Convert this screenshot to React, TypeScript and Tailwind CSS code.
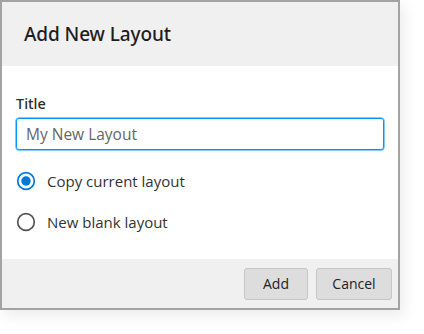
import { useState } from 'react';

type Mode = 'copy' | 'blank';

function Radio({ checked }: { checked: boolean }) {
  return (
    <svg width="20" height="20" viewBox="0 0 20 20" className="shrink-0">
      <circle
        cx="10"
        cy="10"
        r="8.3"
        fill="white"
        stroke={checked ? '#0078d4' : '#555'}
        strokeWidth="1.7"
      />
      {checked && <circle cx="10" cy="10" r="4.7" fill="#0078d4" />}
    </svg>
  );
}

export default function App() {
  const [title, setTitle] = useState('My New Layout');
  const [mode, setMode] = useState<Mode>('copy');

  return (
    <div className="w-[424px] h-[334px] bg-white font-['Open_Sans','Noto_Sans',sans-serif]">
      <div className="w-[400px] h-[310px] flex flex-col border-2 border-[#a3a3a3] bg-white shadow-[4px_6px_14px_rgba(0,0,0,0.08)]">
        {/* Header */}
        <div className="h-16 flex items-center px-[22px] bg-[#f0f0f0]">
          <h2 className="font-['Noto_Sans',sans-serif] text-[19px] font-medium text-[#1e1e1e] tracking-[-0.1px]">
            Add New Layout
          </h2>
        </div>

        {/* Body */}
        <div className="flex-1 flex flex-col px-[14px] pt-7 bg-white">
          <label
            htmlFor="title"
            className="font-['Noto_Sans',sans-serif] text-[14.5px] leading-[18px] font-medium text-[#2b2b2b]"
          >
            Title
          </label>
          <input
            id="title"
            value={title}
            onChange={(e) => setTitle(e.target.value)}
            className="mt-1.5 h-8 w-full px-[9px] text-[15.5px] text-[#666] border border-[#0095ff] rounded-[3px] outline-none shadow-[0_0_0_0.5px_#0095ff]"
          />

          <label className="mt-[21px] flex items-center gap-[11px] h-5 cursor-pointer" onClick={() => setMode('copy')}>
            <Radio checked={mode === 'copy'} />
            <span className="text-[15px] text-[#333]">Copy current layout</span>
          </label>
          <label className="mt-[21px] flex items-center gap-[11px] h-5 cursor-pointer" onClick={() => setMode('blank')}>
            <Radio checked={mode === 'blank'} />
            <span className="text-[15px] text-[#333]">New blank layout</span>
          </label>
        </div>

        {/* Footer */}
        <div className="h-[49px] flex items-center justify-end gap-2 pr-1.5 bg-[#f0f0f0]">
          <button className="w-16 h-8 text-[14px] text-[#222] bg-[#dddddd] border border-[#c6c6c6] rounded-[3px]">
            Add
          </button>
          <button className="w-[76px] h-8 text-[14px] text-[#222] bg-[#dddddd] border border-[#c6c6c6] rounded-[3px]">
            Cancel
          </button>
        </div>
      </div>
    </div>
  );
}
